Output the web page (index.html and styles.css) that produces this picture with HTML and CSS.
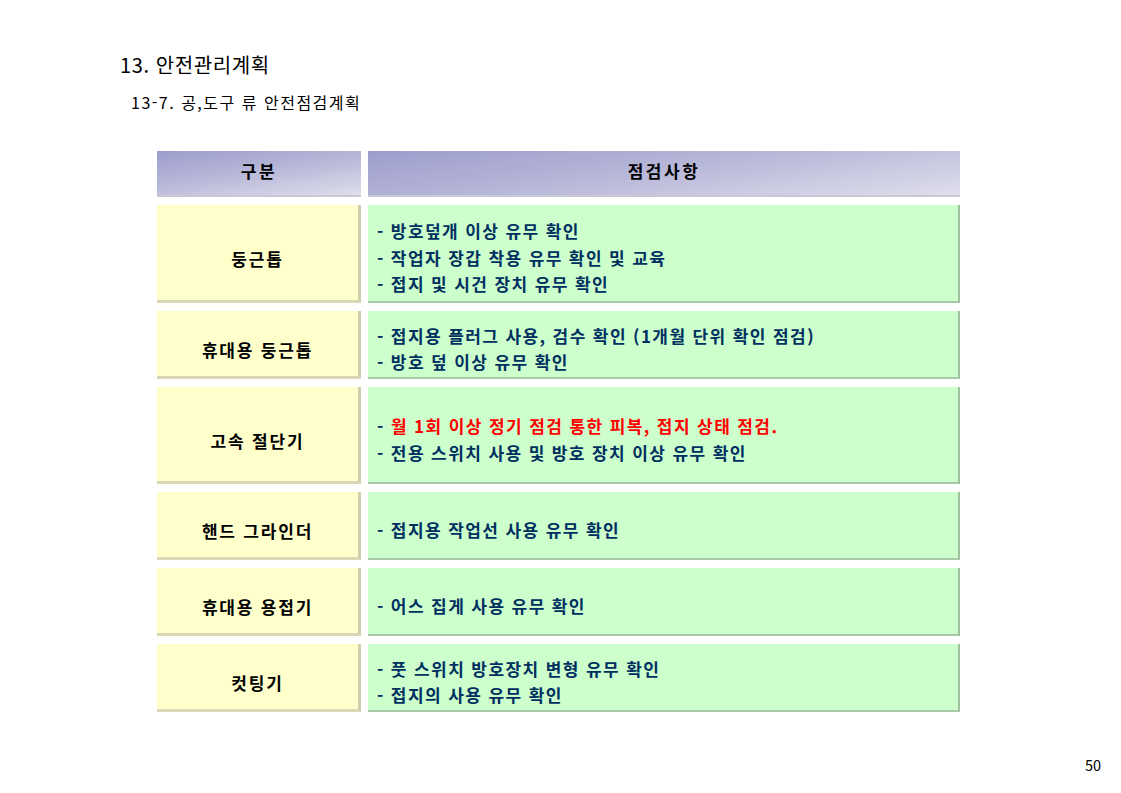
FILE: index.html
```html
<!DOCTYPE html>
<html lang="ko">
<head>
<meta charset="utf-8">
<title>13. 안전관리계획</title>
<link rel="stylesheet" href="styles.css">
</head>
<body>
<div class="page">
  <h1 class="title">13. 안전관리계획</h1>
  <h2 class="subtitle">13-7. 공,도구 류 안전점검계획</h2>

  <div class="table">
    <div class="cell head">구분</div>
    <div class="cell head">점검사항</div>

    <div class="cell name r1">둥근톱</div>
    <div class="cell desc r1">
      <p>- 방호덮개 이상 유무 확인</p>
      <p>- 작업자 장갑 착용 유무 확인 및 교육</p>
      <p>- 접지 및 시건 장치 유무 확인</p>
    </div>

    <div class="cell name r2">휴대용 둥근톱</div>
    <div class="cell desc r2">
      <p>- 접지용 플러그 사용, 검수 확인 (1개월 단위 확인 점검)</p>
      <p>- 방호 덮 이상 유무 확인</p>
    </div>

    <div class="cell name r3">고속 절단기</div>
    <div class="cell desc r3">
      <p>- <span class="red">월 1회 이상 정기 점검 통한 피복, 접지 상태 점검.</span></p>
      <p>- 전용 스위치 사용 및 방호 장치 이상 유무 확인</p>
    </div>

    <div class="cell name r4">핸드 그라인더</div>
    <div class="cell desc r4">
      <p>- 접지용 작업선 사용 유무 확인</p>
    </div>

    <div class="cell name r5">휴대용 용접기</div>
    <div class="cell desc r5">
      <p>- 어스 집게 사용 유무 확인</p>
    </div>

    <div class="cell name r6">컷팅기</div>
    <div class="cell desc r6">
      <p>- 풋 스위치 방호장치 변형 유무 확인</p>
      <p>- 접지의 사용 유무 확인</p>
    </div>
  </div>

  <div class="pagenum">50</div>
</div>
</body>
</html>
```

FILE: styles.css
```css
* { box-sizing: border-box; }

html, body {
  margin: 0;
  padding: 0;
  background: #ffffff;
}

body {
  font-family: "Noto Sans CJK KR", "Noto Sans", sans-serif;
  color: #000;
  width: 1121px;
  height: 793px;
  overflow: hidden;
}

.page {
  position: relative;
  width: 1121px;
  height: 793px;
  padding: 51px 0 0 0;
}

.title {
  margin: 0 0 0 120px;
  font-size: 20px;
  line-height: 28px;
  font-weight: 400;
  letter-spacing: 0.6px;
}

.subtitle {
  margin: 12px 0 0 131px;
  font-size: 16px;
  line-height: 22px;
  font-weight: 400;
  letter-spacing: 1.5px;
}

.table {
  display: grid;
  grid-template-columns: 204px 592px;
  grid-template-rows: 46px 98px 68px 97px 68px 68px 68px;
  column-gap: 7px;
  row-gap: 8px;
  margin: 38px 0 0 157px;
}

.cell {
  display: flex;
  flex-direction: column;
  justify-content: center;
  font-weight: 700;
  font-size: 17px;
  line-height: 26.5px;
}

.head {
  align-items: center;
  background: linear-gradient(172deg, #9d9dcd 0%, #b6b6d8 45%, #dedeeb 100%);
  border-bottom: 2px solid #c8c8d6;
  color: #000;
  padding-bottom: 4px;
  letter-spacing: 2.5px;
}

.name {
  align-items: center;
  background: #ffffcc;
  border-right: 3px solid #cfcfae;
  border-bottom: 3px solid #d8d8b6;
  padding-top: 14px;
  letter-spacing: 1.8px;
}

.desc {
  background: #ccffcc;
  border-right: 2px solid #9fbf9f;
  border-bottom: 2px solid #a8c8a8;
  color: #00305f;
  padding-left: 9px;
  padding-top: 10px;
  letter-spacing: 1.4px;
}

.desc p {
  margin: 0;
  white-space: nowrap;
}

.red { color: #ff0000; }

.pagenum {
  position: absolute;
  left: 1085px;
  top: 755px;
  font-size: 14.5px;
  line-height: 20px;
  font-weight: 400;
}
```
